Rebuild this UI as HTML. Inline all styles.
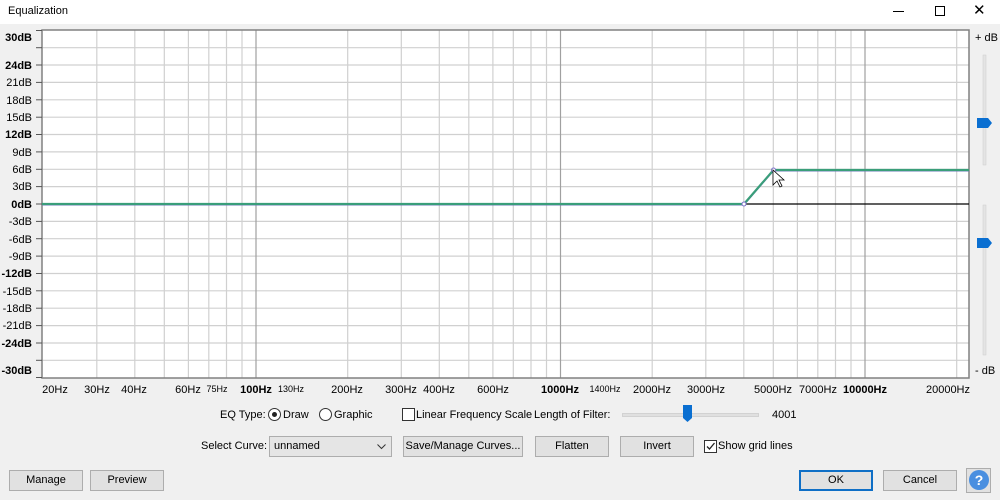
<!DOCTYPE html>
<html><head><meta charset="utf-8"><style>
body{margin:0;width:1000px;height:500px;background:#f0f0f0;font-family:"Liberation Sans",sans-serif;font-size:11px;color:#000;position:relative;overflow:hidden}
.a{position:absolute;white-space:nowrap}
.btn{position:absolute;height:20px;background:#e1e1e1;border:1px solid #adadad;box-sizing:border-box;text-align:center;line-height:18px;font-size:11px}
</style></head><body>
<div class="a" style="left:0;top:0;width:1000px;height:24px;background:#fff"></div>
<div class="a" style="left:8px;top:5px;font-size:11px">Equalization</div>
<div class="a" style="left:893px;top:11px;width:11px;height:1px;background:#000"></div>
<div class="a" style="left:935px;top:6px;width:8px;height:8px;border:1px solid #000"></div>
<div class="a" style="left:973px;top:1px;font-size:15px">✕</div>

<svg class="a" style="left:0;top:0" width="1000" height="400">
<rect x="42" y="30" width="927" height="348" fill="#fff"/>
<g stroke="#d0d0d0" stroke-width="1.2">
<line x1="42" x2="969" y1="47.7" y2="47.7"/><line x1="42" x2="969" y1="65" y2="65"/><line x1="42" x2="969" y1="82.4" y2="82.4"/><line x1="42" x2="969" y1="99.8" y2="99.8"/><line x1="42" x2="969" y1="117.2" y2="117.2"/><line x1="42" x2="969" y1="134.5" y2="134.5"/><line x1="42" x2="969" y1="151.9" y2="151.9"/><line x1="42" x2="969" y1="169.3" y2="169.3"/><line x1="42" x2="969" y1="186.6" y2="186.6"/><line x1="42" x2="969" y1="221.4" y2="221.4"/><line x1="42" x2="969" y1="238.7" y2="238.7"/><line x1="42" x2="969" y1="256.1" y2="256.1"/><line x1="42" x2="969" y1="273.5" y2="273.5"/><line x1="42" x2="969" y1="290.8" y2="290.8"/><line x1="42" x2="969" y1="308.2" y2="308.2"/><line x1="42" x2="969" y1="325.6" y2="325.6"/><line x1="42" x2="969" y1="343" y2="343"/><line x1="42" x2="969" y1="360.3" y2="360.3"/>
<g id="v">
<line x1="96.8" x2="96.8" y1="30" y2="378"/><line x1="134.8" x2="134.8" y1="30" y2="378"/><line x1="164.3" x2="164.3" y1="30" y2="378"/><line x1="188.4" x2="188.4" y1="30" y2="378"/><line x1="208.8" x2="208.8" y1="30" y2="378"/><line x1="226.5" x2="226.5" y1="30" y2="378"/><line x1="242" x2="242" y1="30" y2="378"/>
<line x1="347.7" x2="347.7" y1="30" y2="378"/><line x1="401.3" x2="401.3" y1="30" y2="378"/><line x1="439.3" x2="439.3" y1="30" y2="378"/><line x1="468.8" x2="468.8" y1="30" y2="378"/><line x1="492.9" x2="492.9" y1="30" y2="378"/><line x1="513.3" x2="513.3" y1="30" y2="378"/><line x1="531" x2="531" y1="30" y2="378"/><line x1="546.5" x2="546.5" y1="30" y2="378"/>
<line x1="652.2" x2="652.2" y1="30" y2="378"/><line x1="705.8" x2="705.8" y1="30" y2="378"/><line x1="743.8" x2="743.8" y1="30" y2="378"/><line x1="773.3" x2="773.3" y1="30" y2="378"/><line x1="797.4" x2="797.4" y1="30" y2="378"/><line x1="817.8" x2="817.8" y1="30" y2="378"/><line x1="835.5" x2="835.5" y1="30" y2="378"/><line x1="851" x2="851" y1="30" y2="378"/><line x1="956.7" x2="956.7" y1="30" y2="378"/>
</g></g>
<g stroke="#a0a0a0" stroke-width="1.2"><line x1="256" x2="256" y1="30" y2="378"/><line x1="560.5" x2="560.5" y1="30" y2="378"/><line x1="865" x2="865" y1="30" y2="378"/></g>
<rect x="42" y="30" width="927" height="348" fill="none" stroke="#808080" stroke-width="1.5"/>
<line x1="42" x2="969" y1="204" y2="204" stroke="#000" stroke-width="1.2"/>
<g stroke="#555" stroke-width="1">
<line x1="36" x2="42" y1="30.5" y2="30.5"/><line x1="36" x2="42" y1="47.7" y2="47.7"/><line x1="36" x2="42" y1="65" y2="65"/><line x1="36" x2="42" y1="82.4" y2="82.4"/><line x1="36" x2="42" y1="99.8" y2="99.8"/><line x1="36" x2="42" y1="117.2" y2="117.2"/><line x1="36" x2="42" y1="134.5" y2="134.5"/><line x1="36" x2="42" y1="151.9" y2="151.9"/><line x1="36" x2="42" y1="169.3" y2="169.3"/><line x1="36" x2="42" y1="186.6" y2="186.6"/><line x1="36" x2="42" y1="204" y2="204"/><line x1="36" x2="42" y1="221.4" y2="221.4"/><line x1="36" x2="42" y1="238.7" y2="238.7"/><line x1="36" x2="42" y1="256.1" y2="256.1"/><line x1="36" x2="42" y1="273.5" y2="273.5"/><line x1="36" x2="42" y1="290.8" y2="290.8"/><line x1="36" x2="42" y1="308.2" y2="308.2"/><line x1="36" x2="42" y1="325.6" y2="325.6"/><line x1="36" x2="42" y1="343" y2="343"/><line x1="36" x2="42" y1="360.3" y2="360.3"/><line x1="36" x2="42" y1="377.5" y2="377.5"/>
</g>
<polyline points="42,205 744,205 773.5,171 969,171" fill="none" stroke="#7a70c8" stroke-width="1"/>
<polyline points="42,204 744,204 773.5,170 969,170" fill="none" stroke="#3a9e7a" stroke-width="2.2"/>
<circle cx="744" cy="204" r="2" fill="#fff" stroke="#7a70c8"/>
<circle cx="773.5" cy="170" r="2" fill="#fff" stroke="#7a70c8"/>
<path d="M773 170 L773 185 L777 181 L780 187 L782 186 L779 180 L784 180 Z" fill="#fff" stroke="#000" stroke-width="0.8"/>
<g font-size="11" text-anchor="end" font-family="Liberation Sans">
<text x="32" y="41" font-weight="bold">30dB</text><text x="32" y="69" font-weight="bold">24dB</text><text x="32" y="86">21dB</text><text x="32" y="104">18dB</text><text x="32" y="121">15dB</text><text x="32" y="138" font-weight="bold">12dB</text><text x="32" y="156">9dB</text><text x="32" y="173">6dB</text><text x="32" y="190">3dB</text><text x="32" y="208" font-weight="bold">0dB</text><text x="32" y="225">-3dB</text><text x="32" y="243">-6dB</text><text x="32" y="260">-9dB</text><text x="32" y="277" font-weight="bold">-12dB</text><text x="32" y="295">-15dB</text><text x="32" y="312">-18dB</text><text x="32" y="329">-21dB</text><text x="32" y="347" font-weight="bold">-24dB</text><text x="32" y="374" font-weight="bold">-30dB</text>
</g>
<g font-size="11" text-anchor="middle" font-family="Liberation Sans">
<text x="55" y="393">20Hz</text><text x="97" y="393">30Hz</text><text x="134" y="393">40Hz</text><text x="188" y="393">60Hz</text><text x="217" y="392" font-size="9">75Hz</text><text x="256" y="393" font-weight="bold">100Hz</text><text x="291" y="392" font-size="9">130Hz</text><text x="347" y="393">200Hz</text><text x="401" y="393">300Hz</text><text x="439" y="393">400Hz</text><text x="493" y="393">600Hz</text><text x="560" y="393" font-weight="bold">1000Hz</text><text x="605" y="392" font-size="9">1400Hz</text><text x="652" y="393">2000Hz</text><text x="706" y="393">3000Hz</text><text x="773" y="393">5000Hz</text><text x="818" y="393">7000Hz</text><text x="865" y="393" font-weight="bold">10000Hz</text><text x="948" y="393">20000Hz</text>
</g>
<text x="975" y="41" font-size="11" font-family="Liberation Sans">+ dB</text>
<text x="975" y="374" font-size="11" font-family="Liberation Sans">- dB</text>
<rect x="983" y="55" width="3" height="110" fill="#e4e4e4" stroke="#ccc" stroke-width="0.5"/>
<rect x="983" y="205" width="3" height="150" fill="#e4e4e4" stroke="#ccc" stroke-width="0.5"/>
<path d="M977 118 h11 l4 5 l-4 5 h-11 z" fill="#0a6fd1"/>
<path d="M977 238 h11 l4 5 l-4 5 h-11 z" fill="#0a6fd1"/>
</svg>

<div class="a" style="left:220px;top:409px">EQ Type:</div>
<div class="a" style="left:268px;top:408px;width:11px;height:11px;border:1px solid #333;border-radius:50%;background:#fff"></div>
<div class="a" style="left:272px;top:412px;width:5px;height:5px;border-radius:50%;background:#222"></div>
<div class="a" style="left:283px;top:409px">Draw</div>
<div class="a" style="left:319px;top:408px;width:11px;height:11px;border:1px solid #333;border-radius:50%;background:#fff"></div>
<div class="a" style="left:334px;top:409px">Graphic</div>
<div class="a" style="left:402px;top:408px;width:11px;height:11px;border:1px solid #333;background:#fff"></div>
<div class="a" style="left:416px;top:409px">Linear Frequency Scale</div>
<div class="a" style="left:534px;top:409px">Length of Filter:</div>
<div class="a" style="left:622px;top:413px;width:135px;height:2px;background:#e0e0e0;border:1px solid #d2d2d2"></div>
<svg class="a" style="left:683px;top:405px" width="10" height="18"><path d="M0 0 h9 v13 l-4.5 4 l-4.5 -4 z" fill="#0a6fd1"/></svg>
<div class="a" style="left:772px;top:409px">4001</div>

<div class="a" style="left:201px;top:440px">Select Curve:</div>
<div class="a" style="left:269px;top:436px;width:123px;height:21px;background:#e5e5e5;border:1px solid #adadad;box-sizing:border-box;padding-left:4px;line-height:19px">unnamed<svg style="position:absolute;right:5px;top:7px" width="9" height="6"><path d="M0.5 0.5 L4.5 4.5 L8.5 0.5" fill="none" stroke="#333"/></svg></div>
<div class="btn" style="left:403px;top:436px;width:120px;height:21px">Save/Manage Curves...</div>
<div class="btn" style="left:535px;top:436px;width:74px;height:21px">Flatten</div>
<div class="btn" style="left:620px;top:436px;width:74px;height:21px">Invert</div>
<div class="a" style="left:704px;top:440px;width:11px;height:11px;border:1px solid #333;background:#fff"></div>
<svg class="a" style="left:705px;top:441px" width="11" height="11"><path d="M2 5.5 L4.5 8 L9.5 2" fill="none" stroke="#222" stroke-width="1.3"/></svg>
<div class="a" style="left:718px;top:440px">Show grid lines</div>

<div class="btn" style="left:9px;top:470px;width:74px;height:21px">Manage</div>
<div class="btn" style="left:90px;top:470px;width:74px;height:21px">Preview</div>
<div class="btn" style="left:799px;top:470px;width:74px;height:21px;border:2px solid #0f6fc6;line-height:17px">OK</div>
<div class="btn" style="left:883px;top:470px;width:74px;height:21px">Cancel</div>
<div class="btn" style="left:966px;top:468px;width:25px;height:25px"></div>
<div class="a" style="left:969px;top:470px;width:20px;height:20px;border-radius:50%;background:#4a8fe0;color:#fff;font-weight:bold;font-size:14px;text-align:center;line-height:20px">?</div>
</body></html>
